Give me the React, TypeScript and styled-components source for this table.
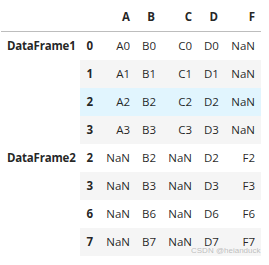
import styled, { createGlobalStyle } from "styled-components";

const GlobalStyle = createGlobalStyle`
    body {
        margin: 0;
        background: #ffffff;
        font-family: "Open Sans", "Noto Sans", sans-serif;
    }
`

type Row = {
    group?: string
    span?: number
    index: string
    cells: string[]
    hover?: boolean
}

const columns = ["A", "B", "C", "D", "F"]
const widths = [79, 19, 37, 25, 37, 26, 37]

const rows: Row[] = [
    {group: "DataFrame1", span: 4, index: "0", cells: ["A0", "B0", "C0", "D0", "NaN"]},
    {index: "1", cells: ["A1", "B1", "C1", "D1", "NaN"]},
    {index: "2", cells: ["A2", "B2", "C2", "D2", "NaN"], hover: true},
    {index: "3", cells: ["A3", "B3", "C3", "D3", "NaN"]},
    {group: "DataFrame2", span: 4, index: "2", cells: ["NaN", "B2", "NaN", "D2", "F2"]},
    {index: "3", cells: ["NaN", "B3", "NaN", "D3", "F3"]},
    {index: "6", cells: ["NaN", "B6", "NaN", "D6", "F6"]},
    {index: "7", cells: ["NaN", "B7", "NaN", "D7", "F7"]},
]

export default function App() {
    return (
        <>
            <GlobalStyle/>
            <Output>
                <Table>
                    <colgroup>
                        {widths.map((w, i) => <col key={i} style={{width: w}}/>)}
                    </colgroup>
                    <thead>
                        <tr>
                            <HeadCell></HeadCell>
                            <HeadCell></HeadCell>
                            {columns.map(c => <HeadCell key={c}>{c}</HeadCell>)}
                        </tr>
                    </thead>
                    <tbody>
                        {rows.map((r, i) => (
                            <BodyRow key={i} $hover={r.hover}>
                                {r.group && <GroupCell rowSpan={r.span}>{r.group}</GroupCell>}
                                <IndexCell>{r.index}</IndexCell>
                                {r.cells.map((c, j) => <Cell key={j}>{c}</Cell>)}
                            </BodyRow>
                        ))}
                    </tbody>
                </Table>
                <Watermark>CSDN @heianduck</Watermark>
            </Output>
        </>
    )
}

const Output = styled.div`
    position: relative;
    width: 260px;
    padding: 3px 0 0 1px;
`

const Table = styled.table`
    border-collapse: collapse;
    border-spacing: 0;
    table-layout: fixed;
    width: 260px;
    font-size: 11.5px;
    line-height: 16px;
    color: rgba(0, 0, 0, 0.87);
`

const HeadCell = styled.th`
    padding: 6px 6px;
    text-align: right;
    font-weight: bold;
    border-bottom: 1px solid #bdbdbd;
    white-space: nowrap;
`

const BodyRow = styled.tr<{ $hover?: boolean }>`
    &:nth-child(even) > td,
    &:nth-child(even) > th:not([rowspan]) {
        background: #f5f5f5;
    }
    & > td, & > th:not([rowspan]) {
        background: ${p => p.$hover ? "#e1f5fe" : "transparent"};
    }
`

const GroupCell = styled.th`
    padding: 6px 6px;
    text-align: left;
    vertical-align: top;
    font-weight: bold;
    letter-spacing: -0.2px;
    white-space: nowrap;
    background: #ffffff;
`

const IndexCell = styled.th`
    padding: 6px 6px;
    text-align: right;
    font-weight: bold;
    white-space: nowrap;
`

const Cell = styled.td`
    padding: 6px 6px;
    text-align: right;
    white-space: nowrap;
`

const Watermark = styled.span`
    position: absolute;
    left: 191px;
    top: 246px;
    font-size: 8px;
    line-height: 9px;
    color: rgba(150, 150, 150, 0.6);
    font-family: "Liberation Sans", sans-serif;
    white-space: nowrap;
`
